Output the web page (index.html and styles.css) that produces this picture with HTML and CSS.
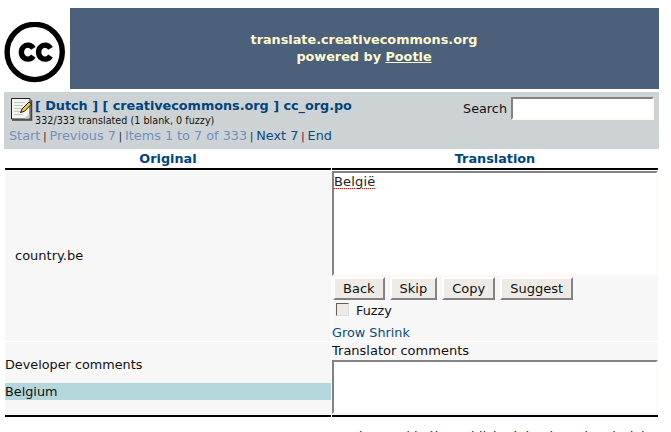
FILE: index.html
```html
<!DOCTYPE html>
<html lang="en">
<head>
<meta charset="utf-8">
<title>Pootle: cc_org.po</title>
<link rel="stylesheet" href="styles.css">
</head>
<body>
<header class="banner">
  <div class="logo">
    <svg width="62" height="62" viewBox="0 0 62 62" fill="none" stroke="#000">
      <circle cx="30.700" cy="30" r="27.600" stroke-width="5.400"/>
      <path d="M29.300 26.300A6.500 7 0 1 0 29.300 34M46.500 26.300A6.500 7 0 1 0 46.500 34" stroke-width="5.400"/>
    </svg>
  </div>
  <div class="title">translate.creativecommons.org<br>powered by <a href="#">Pootle</a></div>
</header>
<section class="toolbar">
  <div class="info">
    <div class="file">
      <svg class="edit" width="23" height="24" viewBox="0 0 23 24">
        <path d="M1.5 1.5h18.5v20.5h-18.5z" fill="#f4f4ee" stroke="#222"/>
        <path d="M2 23h19.5V3" fill="none" stroke="#444" stroke-width="1.5"/>
        <path d="M14.5 21.5l5-5v5z" fill="#ccc"/>
        <path d="M4 5.5h11M4 8.5h9M4 11.5h7M4 14.5h6M4 17.5h8" stroke="#c4c4c0"/>
        <path d="M10.5 15.500l1.500-3.500L19 5l2.500 2-7 7.300z" fill="#f2c744" stroke="#111"/>
      </svg>
      <div>
        <div class="path">[ Dutch ] [ creativecommons.org ] cc_org.po</div>
        <div class="stats">332/333 translated (1 blank, 0 fuzzy)</div>
      </div>
    </div>
    <nav class="pager"><span>Start</span><i>|</i><span>Previous 7</span><i>|</i><span>Items 1 to 7 of 333</span><i>|</i><a href="#">Next 7</a><i>|</i><a href="#">End</a></nav>
  </div>
  <label class="search">Search <input type="text"></label>
</section>
<main class="grid">
  <div class="head">Original</div>
  <div class="head">Translation</div>
  <div class="cell original">country.be</div>
  <div class="cell translation">
    <div class="area"><span class="misspelt">België</span></div>
    <div class="buttons"><button>Back</button><button>Skip</button><button>Copy</button><button>Suggest</button></div>
    <label class="fuzzy"><span class="box"></span>Fuzzy</label>
    <div class="resize"><a href="#">Grow</a> <a href="#">Shrink</a></div>
  </div>
  <div class="cell last developer">
    <div>Developer comments</div>
    <div class="note">Belgium</div>
  </div>
  <div class="cell last">
    <div class="caption">Translator comments</div>
    <div class="area small"></div>
  </div>
</main>
<div class="next">can be used in the published deeds and metadata</div>
</body>
</html>
```
FILE: styles.css
```css
* { box-sizing: border-box; }
html { overflow: hidden; }
body {
  margin: 8px 12px 0 4px;
  height: 424px;
  overflow: hidden;
  background: #fff;
  color: #111;
  font: 12.8px/17px "DejaVu Sans", sans-serif;
}
a { color: #0b4a80; text-decoration: none; }
.banner { display: flex; height: 81px; }
.logo { width: 66px; padding-top: 14px; }
.logo svg { display: block; }
.title {
  flex: 1;
  padding: 23px 1px 0 0;
  background: #4b607a;
  color: #fffacd;
  font-weight: bold;
  text-align: center;
}
.title a { color: #fffacd; text-decoration: underline; }
.toolbar {
  display: flex;
  justify-content: space-between;
  height: 57px;
  margin-top: 3px;
  padding: 5px 5px 0;
  background: #cdd2d4;
}
.file { display: flex; }
.edit { margin: 0 2px 0 1px; }
.path { color: #00447c; font-weight: bold; line-height: 17px; letter-spacing: -0.02px; }
.stats { font-size: 9.6px; line-height: 13px; letter-spacing: 0.03px; }
.pager { color: #7090bd; line-height: 17px; }
.pager i { margin: 0 3px; color: #111; font-size: 9.6px; font-style: normal; }
.search { display: flex; align-items: center; height: 23px; gap: 4px; }
.search input {
  width: 143px;
  height: 23px;
  border: 2px solid;
  border-color: #848284 #fffaf5 #fffaf5 #848284;
  background: #fff;
}
.grid {
  display: grid;
  grid-template-columns: 326px 326px;
  grid-template-rows: 21px 170px 75px;
  column-gap: 1px;
  row-gap: 1px;
  margin-left: 1px;
}
.head {
  border-bottom: 2px solid #000;
  color: #00447c;
  font-weight: bold;
  line-height: 19px;
  text-align: center;
}
.cell { background: #f7f7f7; }
.original { display: flex; align-items: center; padding: 0 0 2px 10px; font-size: 13px; }
.area {
  height: 105px;
  border: 2px solid;
  border-color: #848284 #fffaf5 #fffaf5 #848284;
  background: #fff;
  font-size: 13px;
  line-height: 17px;
  letter-spacing: 0.15px;
}
.misspelt { color: #222; text-decoration: underline dotted #e00000 1px; text-underline-offset: 2px; }
.buttons { display: flex; gap: 5px; padding: 1px 0 0 1px; }
.buttons button {
  height: 23px;
  padding: 0 8px;
  border: 2px solid;
  border-color: #fffefa #848284 #848284 #fffefa;
  background: #eeebe6;
  color: #111;
  font-family: inherit;
  font-size: 13px;
}
.fuzzy { display: flex; align-items: center; height: 21px; gap: 7px; padding-left: 4px; }
.box {
  width: 13px;
  height: 13px;
  margin-top: -2px;
  border: 1px solid;
  border-color: #6b5c59 #ddd #ddd #6b5c59;
  background: #eeebe6;
}
.resize { padding-top: 3px; }
.last { border-bottom: 2px solid #000; }
.developer { padding-top: 14px; }
.note { margin-top: 10px; background: #b4d7dc; }
.caption { font-size: 13px; line-height: 18px; }
.small { height: 54px; }
.next { margin-top: 10px; padding-left: 328px; white-space: nowrap; }
```
